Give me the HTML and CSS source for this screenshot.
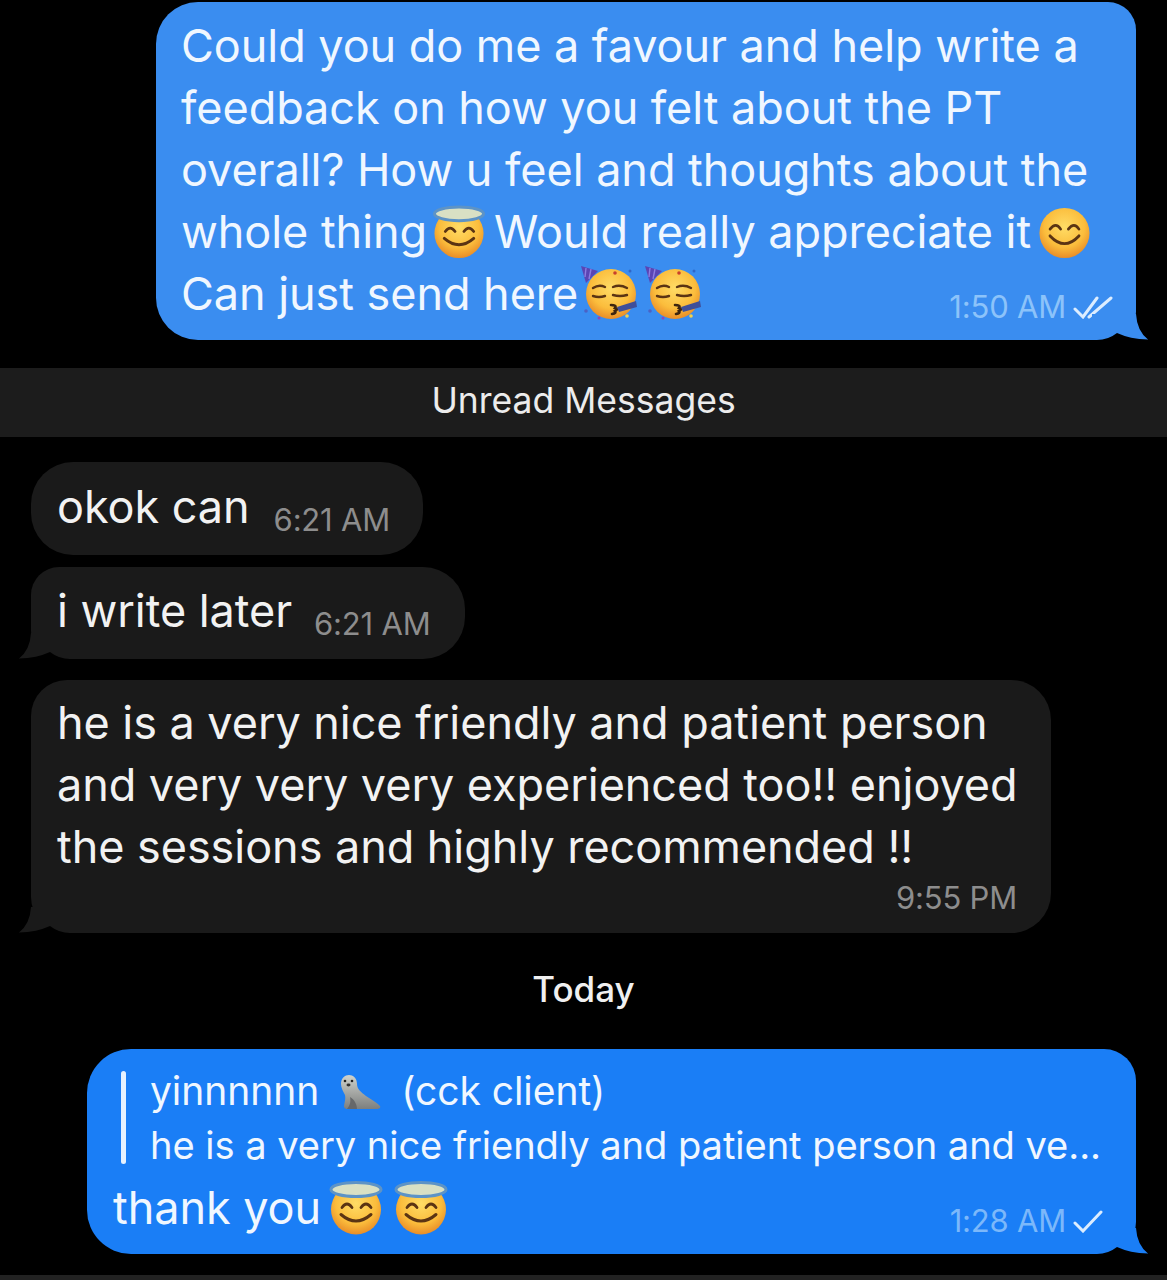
FILE: index.html
```html
<!DOCTYPE html>
<html lang="en">
<head>
    <meta charset="UTF-8">
    <meta name="viewport" content="width=device-width, initial-scale=1.0">
    <title>Chat</title>
    <link rel="stylesheet" href="styles.css">
</head>
<body>
    <svg class="defs" aria-hidden="true">
        <defs>
            <radialGradient id="face" cx="50%" cy="38%" r="62%">
                <stop offset="0" stop-color="#ffdc66"/>
                <stop offset="0.65" stop-color="#fbbd3c"/>
                <stop offset="1" stop-color="#e98d28"/>
            </radialGradient>
            <linearGradient id="seal" x1="0" y1="0" x2="0" y2="1">
                <stop offset="0" stop-color="#d0d3cd"/>
                <stop offset="1" stop-color="#7c7e7d"/>
            </linearGradient>
            <symbol id="smile" viewBox="0 0 54 54">
                <circle cx="27" cy="27" r="26" fill="url(#face)"/>
                <path d="M12 23q6-8 11 0M31 23q6-8 11 0" fill="none" stroke="#5b3413" stroke-width="2.8" stroke-linecap="round"/>
                <path d="M12 30q15 16 30 0" fill="none" stroke="#5b3413" stroke-width="3" stroke-linecap="round"/>
            </symbol>
            <symbol id="halo" viewBox="0 0 54 54">
                <circle cx="27" cy="29" r="25" fill="url(#face)"/>
                <ellipse cx="27" cy="9" rx="25" ry="7" fill="#d9e0c4" stroke="#5d93c6" stroke-width="3"/>
                <path d="M13 27q5-7 10 0M32 27q5-7 10 0" fill="none" stroke="#5b3413" stroke-width="2.8" stroke-linecap="round"/>
                <path d="M12 34q15 13 30 0" fill="none" stroke="#5b3413" stroke-width="3" stroke-linecap="round"/>
            </symbol>
            <symbol id="party" viewBox="0 0 56 54">
                <circle cx="30" cy="28" r="25" fill="url(#face)"/>
                <path d="M0 0l17 5-12 12z" fill="#5a45b4"/>
                <path d="M5 2l-1 9M10 3l-2 10" stroke="#8d7ce0" stroke-width="1.4"/>
                <circle cx="34" cy="7" r="1.8" fill="#c8402c"/>
                <path d="M12 22q6-4 12-1M32 21q7-3 14 1M12 30q6 2 12 0M32 29q7 2 14 0" fill="none" stroke="#5b3413" stroke-width="2.4" stroke-linecap="round"/>
                <path d="M30 39q6 0 4 3q4 1 0 3q2 2-3 3" fill="none" stroke="#3d2510" stroke-width="2.6" stroke-linecap="round"/>
                <path d="M36 41l19-6 1 6-18 5z" fill="#3f4f9a"/>
                <circle cx="5" cy="45" r="1.8" fill="#4b62c4"/>
                <circle cx="49" cy="5" r="1.5" fill="#2f66c8"/>
                <circle cx="46" cy="50" r="1.8" fill="#f2d24c"/>
                <circle cx="18" cy="52" r="1.5" fill="#8f48b8"/>
            </symbol>
            <symbol id="sealion" viewBox="0 0 43 34">
                <path d="M3 9c0-6 4-9 8-9s8 3 8 9c0 5 4 8 9 12 5 3 11 7 14 10 1 2-1 3-4 3H13c-3 1-6 0-7-2 0-4 2-7 1-12C5 16 3 13 3 9z" fill="url(#seal)"/>
                <path d="M12 22c1 5 0 8-3 12h10c0-4-2-9-7-12z" fill="#66686a"/>
                <circle cx="7" cy="6" r="1.3" fill="#222"/>
                <circle cx="14" cy="6" r="1.3" fill="#222"/>
                <ellipse cx="10.500" cy="10" rx="2" ry="1.4" fill="#333"/>
            </symbol>
            <symbol id="tail-shape" viewBox="0 0 56 26">
                <path d="M0 0H44Q45 17 56 25.500V26H5H0z" fill="currentColor"/>
                <path d="M5 26Q16 26 25 19Q38 25 56 25.500V27H5z" fill="#000"/>
            </symbol>
        </defs>
    </svg>

    <main class="chat">
        <div class="bubble out out-first">
            <p>Could you do me a favour and help write a<br>
            feedback on how you felt about the PT<br>
            overall? How u feel and thoughts about the<br>
            whole thing<svg class="emoji halo"><use href="#halo"/></svg>Would really appreciate it<svg class="emoji smile"><use href="#smile"/></svg></p>
            <div class="last-row">
                <p>Can just send here<svg class="emoji party"><use href="#party"/></svg><svg class="emoji party gap"><use href="#party"/></svg></p>
                <span class="meta">1:50 AM
                    <svg class="tick double" viewBox="0 0 40 23"><path d="M2 13l8 8L24 2M16 21L38 2" fill="none" stroke="currentColor" stroke-width="3" stroke-linecap="round"/></svg>
                </span>
            </div>
            <svg class="tail"><use href="#tail-shape"/></svg>
        </div>

        <div class="unread">Unread Messages</div>

        <div class="bubble in short">
            <p>okok can</p>
            <span class="meta">6:21 AM</span>
        </div>
        <div class="bubble in short second">
            <p>i write later</p>
            <span class="meta">6:21 AM</span>
            <svg class="tail"><use href="#tail-shape"/></svg>
        </div>
        <div class="bubble in long">
            <p>he is a very nice friendly and patient person<br>
            and very very very experienced too!! enjoyed<br>
            the sessions and highly recommended !!</p>
            <span class="meta">9:55 PM</span>
            <svg class="tail"><use href="#tail-shape"/></svg>
        </div>

        <div class="day">Today</div>

        <div class="bubble out out-reply">
            <div class="quote">
                <div class="quote-name">yinnnnnn<svg class="emoji seal"><use href="#sealion"/></svg>(cck client)</div>
                <div class="quote-text">he is a very nice friendly and patient person and ve...</div>
            </div>
            <div class="last-row">
                <p>thank you<svg class="emoji halo big"><use href="#halo"/></svg><svg class="emoji halo big gap"><use href="#halo"/></svg></p>
                <span class="meta">1:28 AM
                    <svg class="tick single" viewBox="0 0 30 23"><path d="M2 13l8 8L28 2" fill="none" stroke="currentColor" stroke-width="3" stroke-linecap="round"/></svg>
                </span>
            </div>
            <svg class="tail"><use href="#tail-shape"/></svg>
        </div>
        <div class="bottom-bar"></div>
    </main>
</body>
</html>
```

FILE: styles.css
```css
html, body {
    margin: 0;
    padding: 0;
    background: #000;
}

body {
    font-family: Inter, "Liberation Sans", sans-serif;
    color: #f4f8fc;
    width: 1167px;
    height: 1280px;
    overflow: hidden;
}

.defs {
    position: absolute;
    width: 0;
    height: 0;
}

.chat {
    display: flex;
    flex-direction: column;
    padding-top: 2px;
}

p {
    margin: 0;
}

.bubble {
    position: relative;
    box-sizing: border-box;
    font-size: 45px;
    line-height: 62px;
    letter-spacing: -0.05px;
}

.out-first {
    width: 980px;
    height: 338px;
    margin-left: 156px;
    padding: 13px 26px 0 25px;
    background: #3a8df0;
    border-radius: 42px 28px 28px 42px;
    color: #f0f7ff;
}

.out-reply {
    width: 1049px;
    height: 205px;
    margin-left: 87px;
    margin-top: 38px;
    padding: 15px 26px 0;
    background: #1a7ef6;
    border-radius: 44px 32px 32px 44px;
    color: #f0f7ff;
}

.out .tail {
    position: absolute;
    right: -12px;
    bottom: 0;
    width: 56px;
    height: 26px;
}

.out-first .tail {
    color: #3a8df0;
}

.out-reply .tail {
    color: #1a7ef6;
}

.last-row {
    display: flex;
    justify-content: space-between;
    align-items: flex-start;
}

.meta {
    display: flex;
    align-items: center;
    gap: 7px;
    font-size: 31px;
    letter-spacing: -0.2px;
    white-space: nowrap;
}

.out .meta {
    color: #8cc3fa;
    margin-top: 13px;
    margin-right: -3px;
}

.out-reply .meta {
    color: #7cb8fa;
    margin-top: 13px;
    margin-right: 7px;
}

.tick {
    width: 40px;
    height: 23px;
    color: #dcedff;
}

.tick.single {
    width: 30px;
}

.emoji {
    display: inline-block;
    vertical-align: middle;
}

.emoji.halo {
    width: 54px;
    height: 53px;
    margin: -14px 8px -6px 5px;
}

.emoji.smile {
    width: 53px;
    height: 52px;
    margin: -13px 0 -7px 7px;
}

.emoji.party {
    width: 56px;
    height: 54px;
    margin: -15px 0 -5px 3px;
}

.emoji.party.gap {
    margin-left: 8px;
}

.emoji.big {
    height: 55px;
    margin: -14px 0 -6px 8px;
}

.emoji.big.gap {
    margin-left: 11px;
}

.unread {
    margin-top: 28px;
    height: 69px;
    box-sizing: border-box;
    padding-bottom: 4px;
    display: flex;
    align-items: center;
    justify-content: center;
    background: #1c1c1c;
    font-size: 35.5px;
    color: #ececec;
}

.in {
    background: #1a1a1a;
    margin-left: 31px;
    color: #f2f2f2;
}

.in .tail {
    position: absolute;
    left: -12px;
    bottom: 0;
    width: 56px;
    height: 26px;
    color: #1a1a1a;
    transform: scaleX(-1);
}

.short {
    display: flex;
    align-items: center;
    gap: 24px;
    align-self: flex-start;
    height: 93px;
    margin-top: 25px;
    padding: 0 33px 4px 26px;
    border-radius: 42px;
}

.short .meta {
    color: #8d8d8d;
    margin-top: 26px;
}

.short.second {
    gap: 22px;
    height: 92px;
    margin-top: 12px;
    padding-right: 35px;
    border-radius: 28px 42px 42px 28px;
}

.long {
    width: 1020px;
    height: 253px;
    margin-top: 21px;
    padding: 12px 26px 0 26px;
    border-radius: 36px 40px 40px 36px;
}

.long .meta {
    justify-content: flex-end;
    margin-top: -11px;
    margin-right: 8px;
    color: #8d8d8d;
}

.day {
    margin-top: 34px;
    height: 44px;
    line-height: 44px;
    text-align: center;
    font-size: 35px;
    font-weight: 500;
    color: #f0f0f0;
}

.quote {
    position: relative;
    margin: 0 0 5px 8px;
    padding-left: 29px;
    font-size: 39px;
    line-height: 54px;
    height: 108px;
    white-space: nowrap;
}

.quote-text {
    font-size: 38.1px;
}

.quote::before {
    content: "";
    position: absolute;
    left: 0;
    top: 7px;
    width: 5px;
    height: 93px;
    border-radius: 3px;
    background: #e6f2ff;
}

.emoji.seal {
    width: 43px;
    height: 34px;
    margin: -4px 20px 0 19px;
}

.bottom-bar {
    height: 5px;
    margin-top: 21px;
    background: #222;
}
```
